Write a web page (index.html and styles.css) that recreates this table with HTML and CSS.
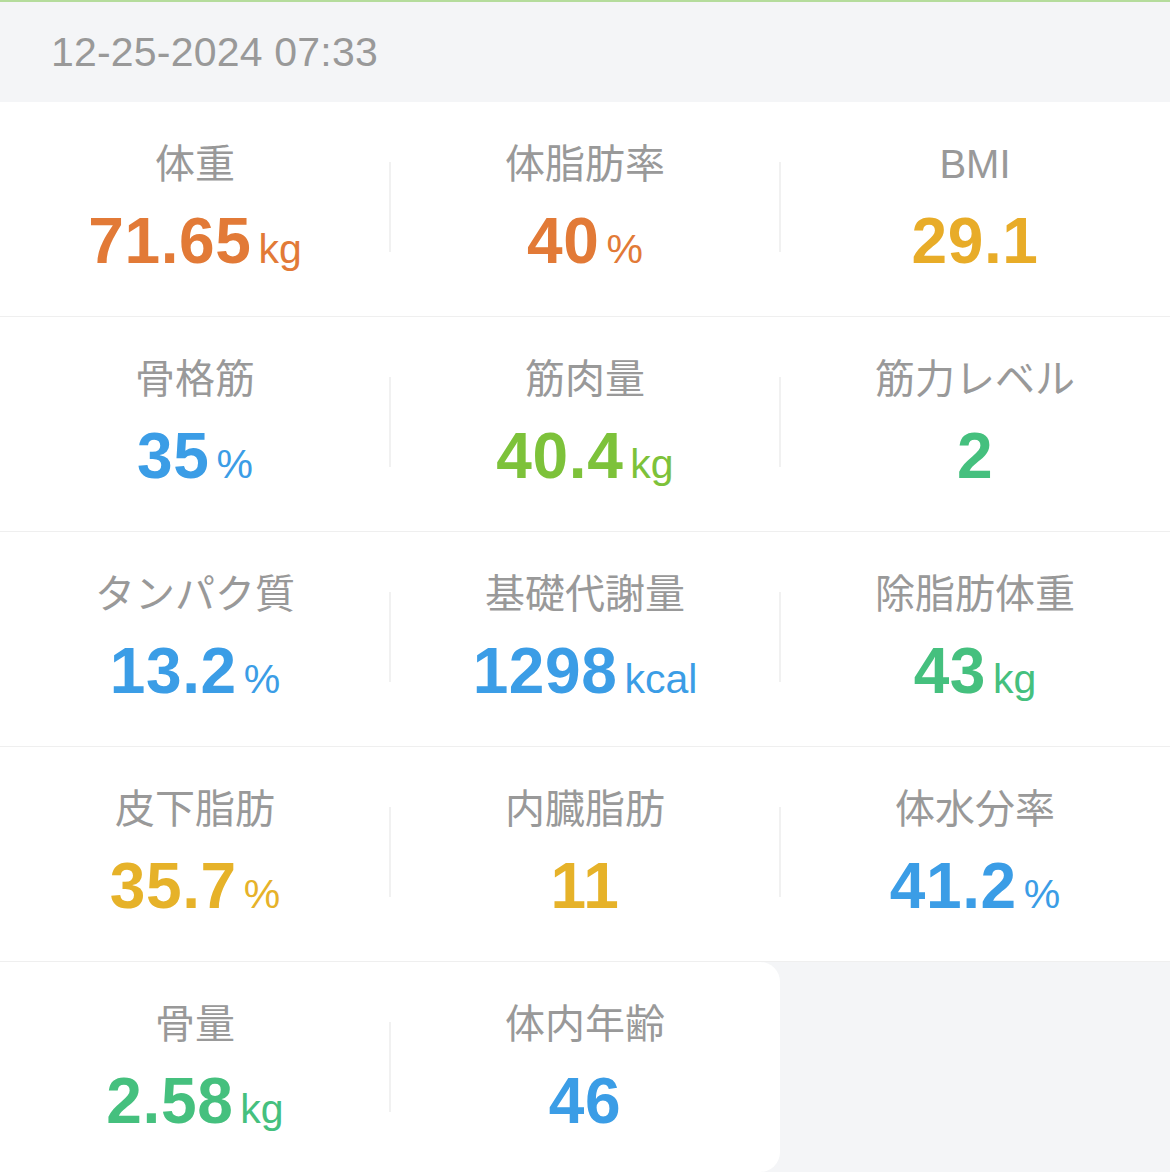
FILE: index.html
```html
<!DOCTYPE html>
<html lang="ja">
<head>
    <meta charset="UTF-8">
    <meta name="viewport" content="width=device-width, initial-scale=1.0">
    <title>体組成</title>
    <link rel="stylesheet" href="styles.css">
</head>
<body>

    <div class="topline"></div>
    <div class="date-bar">12-25-2024 07:33</div>

    <div class="metrics">
        <div class="row">
            <div class="cell">
                <div class="label">体重</div>
                <div class="value orange">71.65<span class="unit">kg</span></div>
            </div>
            <div class="cell">
                <div class="label">体脂肪率</div>
                <div class="value orange">40<span class="unit">%</span></div>
            </div>
            <div class="cell">
                <div class="label">BMI</div>
                <div class="value amber">29.1</div>
            </div>
        </div>

        <div class="row">
            <div class="cell">
                <div class="label">骨格筋</div>
                <div class="value blue">35<span class="unit">%</span></div>
            </div>
            <div class="cell">
                <div class="label">筋肉量</div>
                <div class="value lime">40.4<span class="unit">kg</span></div>
            </div>
            <div class="cell">
                <div class="label">筋力レベル</div>
                <div class="value green">2</div>
            </div>
        </div>

        <div class="row">
            <div class="cell">
                <div class="label">タンパク質</div>
                <div class="value blue">13.2<span class="unit">%</span></div>
            </div>
            <div class="cell">
                <div class="label">基礎代謝量</div>
                <div class="value blue">1298<span class="unit">kcal</span></div>
            </div>
            <div class="cell">
                <div class="label">除脂肪体重</div>
                <div class="value green">43<span class="unit">kg</span></div>
            </div>
        </div>

        <div class="row">
            <div class="cell">
                <div class="label">皮下脂肪</div>
                <div class="value yellow">35.7<span class="unit">%</span></div>
            </div>
            <div class="cell">
                <div class="label">内臓脂肪</div>
                <div class="value yellow">11</div>
            </div>
            <div class="cell">
                <div class="label">体水分率</div>
                <div class="value blue">41.2<span class="unit">%</span></div>
            </div>
        </div>

        <div class="row row-last">
            <div class="cell">
                <div class="label">骨量</div>
                <div class="value green">2.58<span class="unit">kg</span></div>
            </div>
            <div class="cell">
                <div class="label">体内年齢</div>
                <div class="value blue">46</div>
            </div>
        </div>
    </div>

</body>
</html>
```

FILE: styles.css
```css
body {
    margin: 0;
    background-color: #f4f5f7;
    font-family: "Liberation Sans", "Noto Sans CJK JP", sans-serif;
}
.topline {
    height: 2px;
    background-color: #b5dc9c;
}
.date-bar {
    height: 100px;
    line-height: 100px;
    padding-left: 51px;
    font-size: 41px;
    letter-spacing: 0.2px;
    color: #999;
}
.row {
    display: flex;
    height: 215px;
    box-sizing: border-box;
    background-color: #fff;
    border-bottom: 1px solid #efefef;
}
.row-last {
    width: 780px;
    height: 210px;
    border-bottom: none;
    border-radius: 0 20px 20px 0;
}
.cell {
    position: relative;
    width: 390px;
    padding-top: 38px;
    text-align: center;
}
.cell + .cell::before {
    content: "";
    position: absolute;
    left: -1px;
    top: 60px;
    width: 2px;
    height: 90px;
    background-color: #f1f1f1;
}
.label {
    font-size: 40px;
    line-height: 48px;
    color: #999;
}
.value {
    margin-top: 17px;
    font-size: 64px;
    font-weight: bold;
    letter-spacing: 0.6px;
    line-height: 72px;
}
.unit {
    margin-left: 7px;
    font-size: 41px;
    font-weight: normal;
    letter-spacing: 0;
    line-height: 1;
}
.orange { color: #e27a37; }
.amber { color: #e8ac28; }
.yellow { color: #e6b229; }
.blue { color: #3b9de6; }
.lime { color: #7dc23a; }
.green { color: #45c07e; }
```
